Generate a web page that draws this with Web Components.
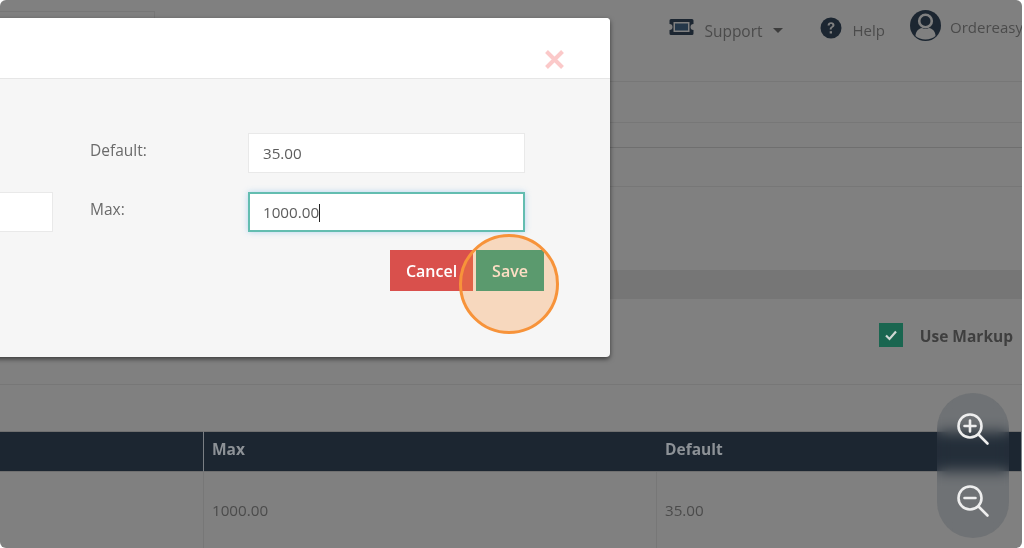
<!DOCTYPE html>
<html>
<head>
<meta charset="utf-8">
<title>Markup</title>
<style>
    html, body { margin: 0; height: 100%; background: #fff; overflow: hidden; }
    body { font-family: "Open Sans", "Liberation Sans", sans-serif; }
</style>
</head>
<body>

<template id="top-bar-template">
    <style>
        :host { display: flex; height: 81px; border-bottom: 1px solid #777; color: #4b4b4b; font-size: 15.500px; box-sizing: content-box; }
        .search { width: 155px; height: 30px; margin-top: 11px; box-sizing: border-box; border: 1px solid #777; border-left: 0; margin-right: auto; }
        .item { display: flex; align-items: center; height: 22px; }
        .support { margin-top: 16px; }
        .help { margin: 17px 0 0 37px; font-size: 15px; }
        .user { margin: 10px 0 0 25px; height: 31px; width: 112px; overflow: hidden; white-space: nowrap; font-size: 15px; }
        .support span { margin: 7px 0 0 10px; }
        .help span { margin: 4px 0 0 11px; }
        .user span { margin: 3px 0 0 9px; }
        .caret { width: 0; height: 0; margin: 6px 0 0 10px; border: 5px solid transparent; border-top: 5px solid #3d3d3d; border-bottom: 0; }
        svg { display: block; flex: none; }
    </style>
    <div class="search"></div>
    <div class="item support">
        <svg width="25" height="18" viewBox="0 0 25 18"><path fill="#1c2631" fill-rule="evenodd" d="M2 1h21a1.500 1.500 0 0 1 1.500 1.500V6a3 3 0 0 0 0 6v3.500A1.500 1.500 0 0 1 23 17H2a1.500 1.500 0 0 1-1.500-1.500V12a3 3 0 0 0 0-6V2.500A1.500 1.500 0 0 1 2 1zM4.500 4v10h16V4z"/><rect x="6" y="5.500" width="13" height="7" fill="#25384a"/></svg>
        <span>Support</span><i class="caret"></i>
    </div>
    <div class="item help">
        <svg width="22" height="22" viewBox="0 0 22 22"><circle cx="11" cy="11" r="10.500" fill="#1c2631"/><path d="M7.600 8.400c0-2 1.500-3.200 3.500-3.200s3.400 1.200 3.400 2.900c0 2.400-2.900 2.300-2.900 4.400H9.700c0-3 2.700-3 2.700-4.300 0-.7-.6-1.100-1.300-1.100-.9 0-1.400.5-1.500 1.300z" fill="#808080"/><rect x="9.700" y="14.200" width="2.300" height="2.300" fill="#808080"/></svg>
        <span>Help</span>
    </div>
    <div class="item user">
        <svg width="31" height="31" viewBox="0 0 31 31"><circle cx="15.500" cy="15.500" r="15.500" fill="#1c2631"/><circle cx="15.500" cy="11" r="6.300" fill="none" stroke="#808080" stroke-width="2.600"/><path d="M5.500 26c0-5 3.500-7.500 6.500-8 2 1.200 5 1.200 7 0 3 .5 6.500 3 6.500 8-2.500 2.300-6 3.500-10 3.500s-7.500-1.200-10-3.500z" fill="#808080"/></svg>
        <span>Ordereasy</span>
    </div>
</template>

<template id="data-table-template">
    <style>
        :host { display: grid; grid-template-columns: 204px 453px 1fr; grid-template-rows: 41px 76px; font-size: 15.200px; color: #4b4b4b; }
        div { box-sizing: border-box; padding-left: 8px; display: flex; align-items: center; }
        .head { background: #1c2631; color: #8d9297; font-size: 15.500px; font-weight: 700; padding-bottom: 5px; border-top: 1px solid #707070; border-bottom: 1px solid #707070; border-right: 1px solid #7a7f84; }
        .head:nth-child(3) { border-right: 0; }
        .cell { border-right: 1px solid #777; }
        .cell:last-of-type { border-right: 0; }
    </style>
    <div class="head"></div><div class="head">Max</div><div class="head">Default</div>
    <div class="cell"></div><div class="cell">1000.00</div><div class="cell">35.00</div>
</template>

<template id="check-row-template">
    <style>
        :host { display: flex; align-items: center; justify-content: flex-end; height: 86px; border-bottom: 1px solid #777; padding: 0 9px 13px 0; color: #3f3f3f; font-size: 15.500px; font-weight: 700; box-sizing: border-box; }
        .box { width: 24px; height: 24px; background: #1a6650; margin-right: 17px; display: flex; align-items: center; justify-content: center; }
        span { margin-top: 2px; }
    </style>
    <div class="box"><svg width="14" height="12" viewBox="0 0 14 12"><path d="M2 6.500l3.500 3.500L12 2.500" fill="none" stroke="#cfd8d4" stroke-width="2.200"/></svg></div>
    <span><slot></slot></span>
</template>

<template id="app-button-template">
    <style>
        :host { display: block; height: 41px; color: #fff; font-size: 16px; font-weight: 600; }
        div { height: 100%; display: flex; align-items: center; justify-content: center; background: var(--bg); }
    </style>
    <div><slot></slot></div>
</template>

<template id="form-field-template">
    <style>
        :host { display: block; height: 40px; box-sizing: border-box; background: #fff; border: 1px solid #e9e9e9; font-size: 15.200px; color: #5c5c5c; padding: 0 14px; line-height: 38px; }
        :host([focused]) { border: 2px solid #63bdb0; box-shadow: 0 0 6px rgba(102, 175, 233, .45); padding: 0 13px; line-height: 36px; }
        .caret { display: none; width: 1px; height: 18px; background: #222; vertical-align: -4px; }
        :host([focused]) .caret { display: inline-block; }
    </style>
    <slot></slot><span class="caret"></span>
</template>

<template id="modal-dialog-template">
    <style>
        :host { display: block; position: absolute; left: -200px; top: 18px; width: 810px; background: #f6f6f6; border-radius: 4px; box-shadow: 0 2px 5px rgba(0, 0, 0, .55); color: #6a6a6a; font-size: 15.500px; overflow: hidden; filter: blur(.35px); }
        header { height: 61px; background: #fff; border-bottom: 1px solid #e6e6e6; display: flex; justify-content: flex-end; padding: 31px 45px 0 0; box-sizing: border-box; }
        .form { display: grid; grid-template-columns: 253px 195px 277px; row-gap: 19px; grid-auto-rows: 40px; padding-top: 54px; }
        .label { padding-left: 37px; line-height: 34px; }
        footer { display: flex; justify-content: flex-end; gap: 3px; padding: 18px 66px 66px 0; }
    </style>
    <header>
        <svg width="21" height="21" viewBox="0 0 21 21"><path d="M2.500 2.500l16 16M18.500 2.500l-16 16" stroke="#fbc9c9" stroke-width="4"/></svg>
    </header>
    <div class="form">
        <div></div><div class="label">Default:</div><slot name="default"></slot>
        <slot name="lead"></slot><div class="label">Max:</div><slot name="max"></slot>
    </div>
    <footer><slot></slot></footer>
</template>

<template id="zoom-control-template">
    <style>
        :host { display: flex; flex-direction: column; align-items: center; justify-content: space-between; position: absolute; left: 937px; top: 393px; width: 72px; height: 145px; padding: 18px 0 19px; box-sizing: border-box; border-radius: 36px; background: rgba(60, 70, 85, .25); backdrop-filter: blur(7px); }
        svg { display: block; }
    </style>
    <svg width="36" height="36" viewBox="0 0 36 36" fill="none" stroke="#eee" stroke-width="2.600" stroke-linecap="round"><circle cx="15" cy="15" r="11.500"/><path d="M23.500 23.500l9 9M9.500 15h11M15 9.500v11"/></svg>
    <svg width="36" height="36" viewBox="0 0 36 36" fill="none" stroke="#eee" stroke-width="2.600" stroke-linecap="round"><circle cx="15" cy="15" r="11.500"/><path d="M23.500 23.500l9 9M9.500 15h11"/></svg>
</template>

<template id="spot-ring-template">
    <style>
        :host { display: block; position: absolute; left: 459px; top: 234px; width: 100px; height: 100px; box-sizing: border-box; border-radius: 50%; border: 3px solid #f7933a; background: rgba(247, 147, 58, .3); }
    </style>
</template>

<template id="app-page-template">
    <style>
        :host { display: block; position: relative; width: 1022px; height: 548px; background: #808080; border-radius: 6px; overflow: hidden; }
        .row { height: 40px; border-bottom: 1px solid #777; box-sizing: content-box; }
        .r2 { height: 24px; border-bottom-color: #6f6f6f; }
        .r3 { height: 38px; }
        .spacer { height: 83px; }
        .band { height: 29px; background: #767676; }
        .gap { height: 46px; }
        .soft { filter: blur(.4px); position: absolute; inset: 0; }
    </style>
    <div class="soft">
        <top-bar></top-bar>
        <div class="row"></div>
        <div class="row r2"></div>
        <div class="row r3"></div>
        <div class="spacer"></div>
        <div class="band"></div>
        <check-row>Use Markup</check-row>
        <div class="gap"></div>
        <data-table></data-table>
    </div>
    <zoom-control></zoom-control>
    <slot></slot>
</template>

<app-page>
    <modal-dialog>
        <form-field slot="default">35.00</form-field>
        <form-field slot="lead"></form-field>
        <form-field slot="max" focused>1000.00</form-field>
        <app-button style="--bg:#d9504c;width:83px">Cancel</app-button>
        <app-button style="--bg:#179e85;width:68px">Save</app-button>
    </modal-dialog>
    <spot-ring></spot-ring>
</app-page>

<script>
    // every element just stamps its own template into an open shadow root
    class TemplatedElement extends HTMLElement {
        constructor() {
            super();
            this.attachShadow({ mode: 'open' });
            const template = document.getElementById(this.localName + '-template');
            this.shadowRoot.appendChild(template.content.cloneNode(true));
        }
    }

    ['top-bar', 'data-table', 'check-row', 'app-button', 'form-field', 'modal-dialog', 'zoom-control', 'spot-ring', 'app-page'].forEach(name => {
        customElements.define(name, class extends TemplatedElement {});
    });
</script>
</body>
</html>
